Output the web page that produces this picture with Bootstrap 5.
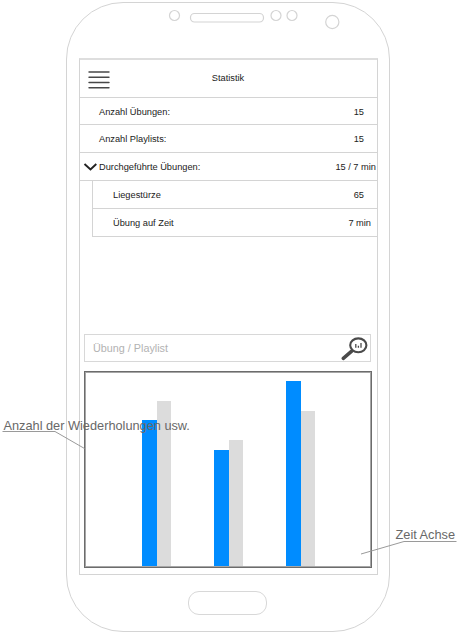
<!DOCTYPE html>
<html lang="de">
<head>
<meta charset="utf-8">
<meta name="viewport" content="width=device-width, initial-scale=1">
<title>Statistik</title>
<link href="https://cdn.jsdelivr.net/npm/bootstrap@5.3.0/dist/css/bootstrap.min.css" rel="stylesheet">
<style>
body{font-family:"Liberation Sans",Arial,sans-serif;font-size:9.25px;line-height:12px;color:#222;width:464px;height:640px;overflow:hidden}
svg{display:block}
.phone{width:324px;height:630px;margin:2px 0 0 66px;border:1px solid #d4d4d4;border-radius:57px}
.sensors{width:322px;height:55px}
.screen{width:299px;height:517px;margin-left:12px;border:1px solid #d4d4d4;border-top:2px solid #dedede;flex:none}
.topbar{height:38px;border-bottom:1px solid #d4d4d4;padding-left:8px}
.title-text{padding:0 31px 1px 0}
.stat{height:28px;border-bottom:1px solid #d4d4d4;padding:0 13px 0 19px}
.stat.first{height:27px;padding-top:1px}
.stat.open{padding:0 1px 0 3px}
.open-label{padding-left:2px}
.sub-list{margin-left:12px;border-left:1px solid #d4d4d4;height:56px;margin-bottom:97px}
.sub-list .stat{padding-left:20px}
.sub-list .last-stat{padding-right:6px}
.search-box{width:287px;height:28px;margin-left:4px;border:1px solid #d8d8d8;padding-left:8px;font-size:10.8px;color:#b2b2b2}
.chart{width:288px;height:197px;margin:9px 0 0 4px;border:1px solid #6c6c6c;box-shadow:inset 0 0 0 1px #a6a6a6;padding:0 0 1px 57px}
.pair{width:29px;margin-right:43px}
.bar{width:14.5px}
.blue{background:#008cff}
.grey{background:#dcdcdc}
.home{width:79px;height:24px;border:1.5px solid #d8d8d8;border-radius:11px;margin:16px 0 0 121px}
.note{font-size:12.75px;line-height:15px;color:#686868;white-space:nowrap}
.note-left{left:3.5px;top:418px}
.note-right{left:395.5px;top:527px}
</style>
<script src="https://cdn.jsdelivr.net/npm/bootstrap@5.3.0/dist/js/bootstrap.bundle.min.js"></script>
</head>
<body class="bg-white position-relative">
<main class="phone d-flex flex-column">
  <svg class="sensors flex-shrink-0" viewBox="67 3 322 55" fill="none" stroke="#d4d4d4" stroke-width="1.2">
    <circle cx="174.5" cy="15.5" r="5"/><rect x="190.5" y="13.5" width="73" height="8.5" rx="4"/>
    <circle cx="276" cy="15.5" r="5"/><circle cx="292" cy="15.5" r="5"/><circle cx="332.3" cy="22" r="6.6"/>
  </svg>
  <section class="screen">
    <header class="topbar d-flex align-items-center">
      <svg width="22" height="20" viewBox="0 0 22 20" stroke="#484848" stroke-width="1.4" stroke-linecap="round"><path d="M1 3H21M1 8.3H21M1 13.5H21M1 18.7H21"/></svg>
      <div class="title-text flex-grow-1 text-center">Statistik</div>
    </header>
    <div class="stat first d-flex align-items-center justify-content-between"><span>Anzahl Übungen:</span><span>15</span></div>
    <div class="stat d-flex align-items-center justify-content-between"><span>Anzahl Playlists:</span><span>15</span></div>
    <div class="stat open d-flex align-items-center"><svg width="14" height="10" viewBox="0 0 14 10" fill="none" stroke="#222" stroke-width="1.9"><path d="M1.5 2L7.5 7.5L13.3 2"/></svg><span class="open-label flex-grow-1">Durchgeführte Übungen:</span><span>15 / 7 min</span></div>
    <div class="sub-list">
      <div class="stat d-flex align-items-center justify-content-between"><span>Liegestürze</span><span>65</span></div>
      <div class="stat last-stat d-flex align-items-center justify-content-between"><span>Übung auf Zeit</span><span>7 min</span></div>
    </div>
    <div class="search-box d-flex align-items-center justify-content-between">
      <span>Übung / Playlist</span>
      <svg width="29" height="26" viewBox="341 335 29 26" fill="none" stroke="#4a4a4a"><ellipse cx="358.3" cy="345.3" rx="8.1" ry="6.9" stroke-width="2.1"/><path d="M352 350.8L343.3 358.3" stroke-width="3.5" stroke-linecap="round"/><path d="M355.8 347.7V344M358.4 347.7V345.8M361 347.7V343" stroke-width="1.3"/></svg>
    </div>
    <div class="chart d-flex align-items-end">
      <div class="pair d-flex align-items-end"><div class="bar blue" style="height:146px"></div><div class="bar grey" style="height:165px"></div></div>
      <div class="pair d-flex align-items-end"><div class="bar blue" style="height:116px"></div><div class="bar grey" style="height:126px"></div></div>
      <div class="pair d-flex align-items-end"><div class="bar blue" style="height:185px"></div><div class="bar grey" style="height:155px"></div></div>
    </div>
  </section>
  <div class="home flex-shrink-0"></div>
</main>
<svg class="position-absolute top-0 start-0" width="464" height="640" fill="none" stroke="#9a9a9a"><path d="M2.5 431.5H55L84.5 448.5M456.5 541.5H404L361 554"/></svg>
<div class="note note-left position-absolute">Anzahl der Wiederholungen usw.</div>
<div class="note note-right position-absolute">Zeit Achse</div>
</body>
</html>
